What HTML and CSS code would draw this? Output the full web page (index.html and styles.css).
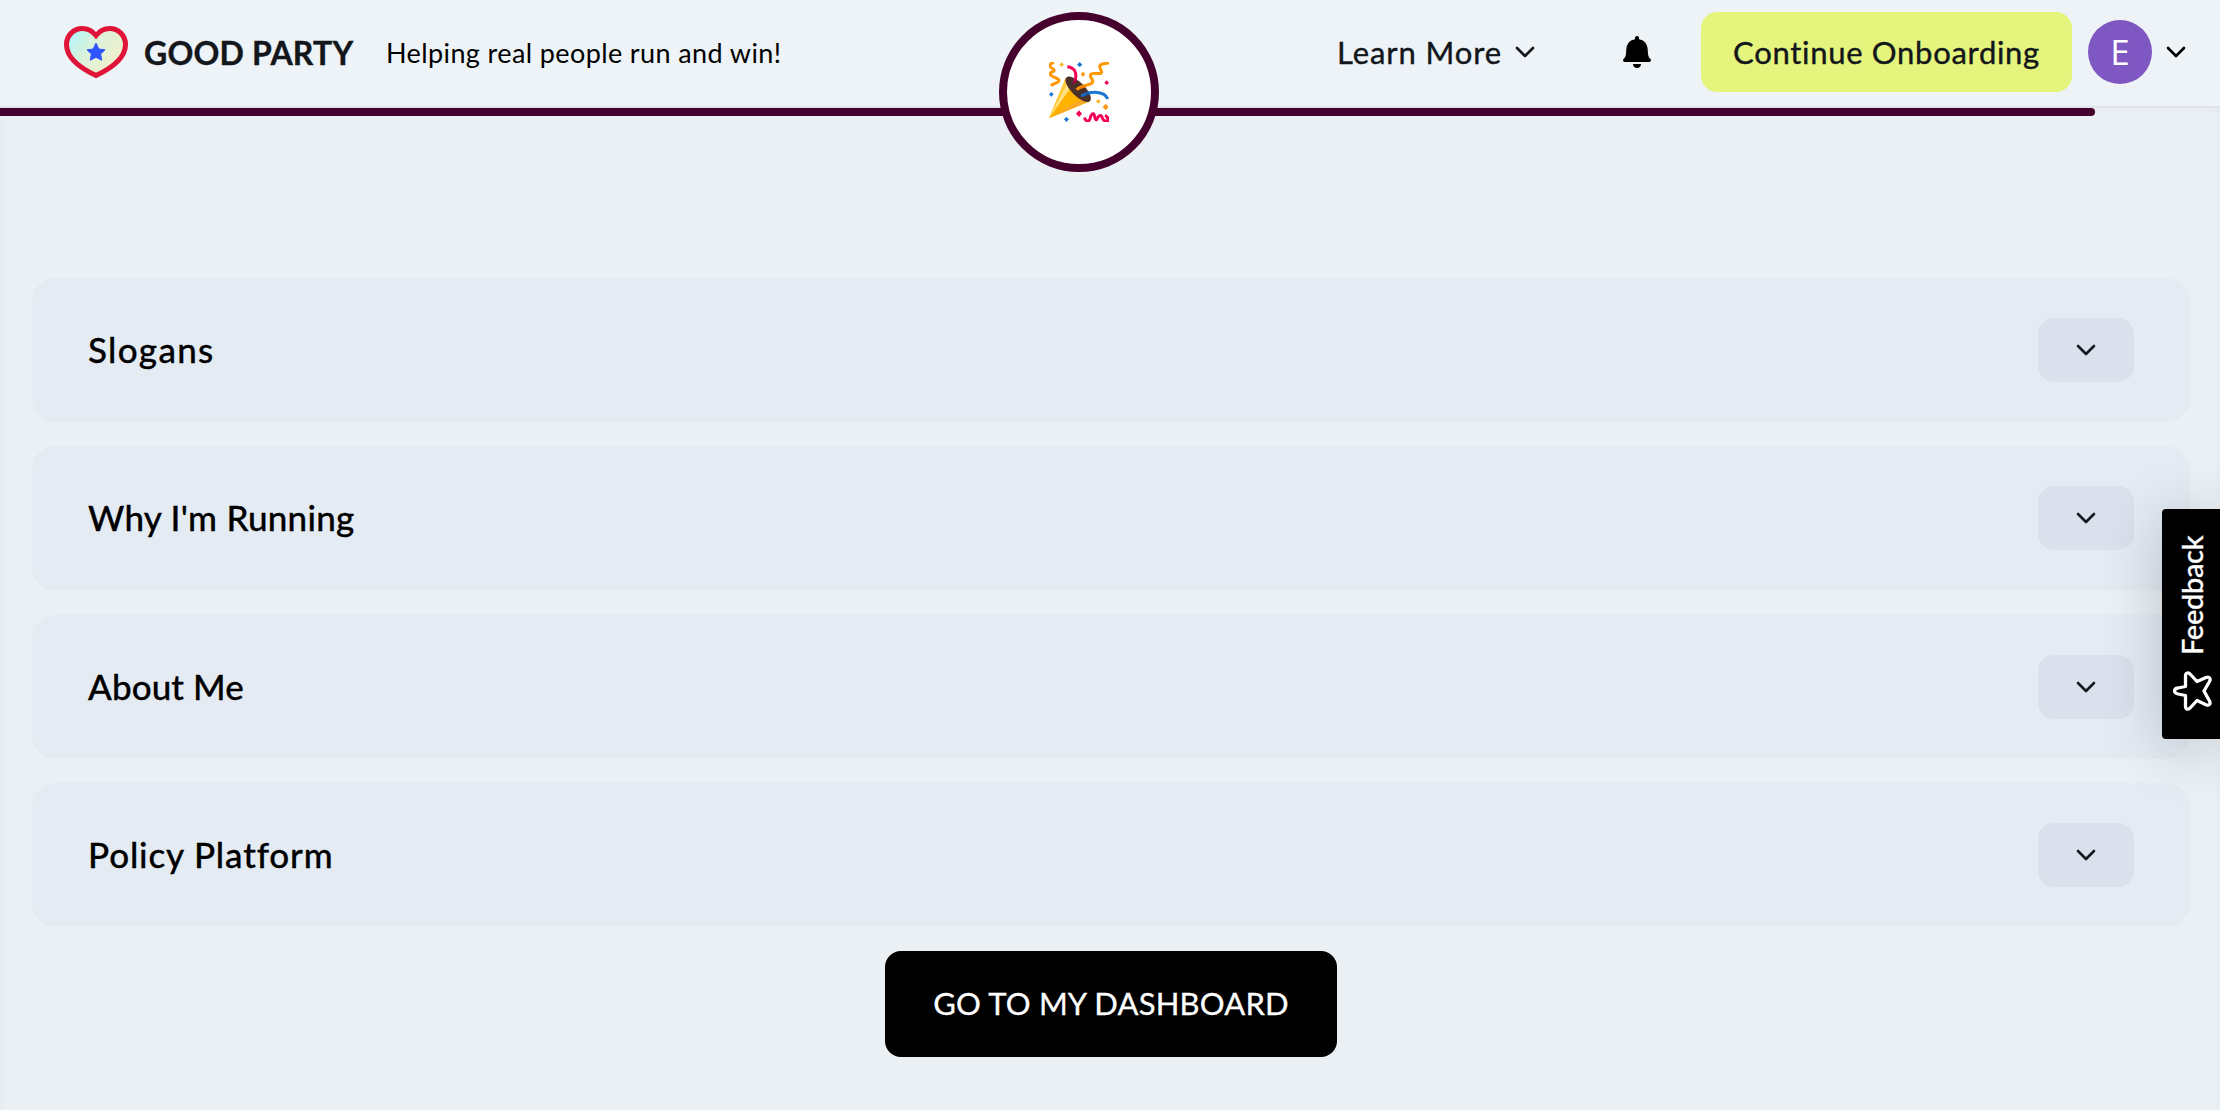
FILE: index.html
```html
<!DOCTYPE html>
<html lang="en">
<head>
    <meta charset="UTF-8">
    <title>Good Party</title>
    <link rel="stylesheet" href="styles.css">
</head>
<body>
    <header class="navbar">
        <a class="logo">
            <svg class="logo-heart" viewBox="0 0 64 53">
                <defs>
                    <linearGradient id="heartFill" x1="0" y1="0" x2="1" y2="0.6">
                        <stop offset="0.05" stop-color="#aff5fb"/>
                        <stop offset="0.5" stop-color="#dcf2d9"/>
                        <stop offset="1" stop-color="#f3efca"/>
                    </linearGradient>
                </defs>
                <path d="M32 9.5C28 4.500 23.500 2.500 18.500 2.500C9.500 2.500 2.500 9.500 2.500 18.500C2.500 32 16 42 32 49.500C48 42 61.500 32 61.500 18.500C61.500 9.500 54.500 2.500 45.500 2.500C40.500 2.500 36 4.500 32 9.500Z" fill="url(#heartFill)" stroke="#df1438" stroke-width="5"/>
                <path d="M32 17L34.800 23L41 23.800L36.600 28L37.800 34.200L32 31.300L26.200 34.200L27.400 28L23 23.800L29.200 23Z" fill="#2f55ff" stroke="#2f55ff" stroke-linejoin="round"/>
            </svg>
            <span class="logo-text">GOOD PARTY</span>
        </a>
        <div class="tagline">Helping real people run and win!</div>
        <nav class="nav-right">
            <div class="learn-more">
                <span class="learn-text">Learn More</span>
                <svg class="chevron" viewBox="0 0 20 12"><path d="M2 2L10 10L18 2"/></svg>
            </div>
            <svg class="bell" viewBox="0 0 28 32">
                <path d="M14 0C15.200 0 16 0.800 16 2V3.200C21 4 24.200 7.600 24.600 12.500L25.100 18.500C25.300 21 26.500 21.800 27.500 23C28.400 24.200 27.800 26 26.200 26H1.800C0.200 26 -0.400 24.200 0.500 23C1.500 21.800 2.700 21 2.900 18.500L3.400 12.500C3.800 7.600 7 4 12 3.200V2C12 0.800 12.800 0 14 0Z"/>
                <path d="M10 28H18C18 30.500 16.200 32 14 32C11.800 32 10 30.500 10 28Z"/>
            </svg>
            <button class="onboarding">Continue Onboarding</button>
            <div class="avatar">E</div>
            <svg class="chevron chevron-dark" viewBox="0 0 20 12"><path d="M2 2L10 10L18 2"/></svg>
        </nav>
        <div class="progress"></div>
        <div class="badge">
            <svg viewBox="0 0 180 180" class="confetti">
                <path d="M0 169L50 48C60 75 90 108 125 117Z" fill="#ffb300"/>
                <path d="M0 169L50 48C53 62 57 70 62 76Z" fill="#ffca3a"/>
                <path d="M1 167L54 66L64 79Z" fill="#ffe082"/>
                <path d="M2 168L102 108L124 117Z" fill="#f9a825"/>
                <ellipse cx="87.500" cy="82" rx="50" ry="20" transform="rotate(45 87.500 82)" fill="#4b3029"/>
                <path d="M55 14C78 16 86 34 77 60" fill="none" stroke="#f50057" stroke-width="9"/>
                <path d="M71 68C72 60 76 55 80 50L83 52C83 60 78 66 71 68Z" fill="#a4003f"/>
                <path d="M83 83C96 70 110 72 126 65C138 59 125 48 124 42C124 29 145 37 155 34C165 29 146 18 154 9C161 3 171 4 180 3" fill="none" stroke="#ff9800" stroke-width="9"/>
                <path d="M82 84L104 68L113 76Z" fill="#ef7d00"/>
                <path d="M97 102C127 85 168 88 176 111" fill="none" stroke="#1976d2" stroke-width="9"/>
                <path d="M96 103L118 87L122 97Z" fill="#155cb0"/>
                <path d="M15 1C1 6 -2 11 8 18C18 24 18 27 9 30C-2 34 3 40 14 45C25 49 34 54 28 59C20 66 11 65 6 71" fill="none" stroke="#ff9800" stroke-width="9"/>
                <path d="M106 167C112 180 119 181 123 170C127 154 133 151 136 160C139 172 141 178 145 169C151 157 158 158 160 168C162 179 174 178 177 179C178 171 176 163 168 160" fill="none" stroke="#f50057" stroke-width="9"/>
                <path d="M38 1L45 8L38 15L31 8ZM148 111L155 118L148 125L141 118Z" fill="#fbb836"/>
                <path d="M102 29L109 37L102 45L95 37ZM170 125L179 135L170 145L161 135Z" fill="#ff9817"/>
                <path d="M92 0L100 8L92 15L84 8ZM7 90L14 97L7 104L0 97ZM52 165L60 172L52 180L45 172Z" fill="#1976d2"/>
                <path d="M90 145L99 155L90 165L81 155ZM173 55L180 62L173 69L166 62Z" fill="#f50057"/>
            </svg>
        </div>
    </header>

    <main class="content">
        <section class="card">
            <h3 class="card-title slogans">Slogans</h3>
            <button class="toggle"><svg class="chevron" viewBox="0 0 20 12"><path d="M2 2L10 10L18 2"/></svg></button>
        </section>
        <section class="card">
            <h3 class="card-title why">Why I'm Running</h3>
            <button class="toggle"><svg class="chevron" viewBox="0 0 20 12"><path d="M2 2L10 10L18 2"/></svg></button>
        </section>
        <section class="card">
            <h3 class="card-title about">About Me</h3>
            <button class="toggle"><svg class="chevron" viewBox="0 0 20 12"><path d="M2 2L10 10L18 2"/></svg></button>
        </section>
        <section class="card">
            <h3 class="card-title policy">Policy Platform</h3>
            <button class="toggle"><svg class="chevron" viewBox="0 0 20 12"><path d="M2 2L10 10L18 2"/></svg></button>
        </section>
        <button class="dashboard">GO TO MY DASHBOARD</button>
    </main>

    <div class="feedback">
        <span class="feedback-text">Feedback</span>
        <svg class="star" viewBox="0 0 40 40">
            <path d="M2.500 20C2.500 18 4 17.300 6 17L13.500 15.500V5C13.500 1.500 16.500 1 18.500 3.500L25 10.500L34 6.500C37.500 5 39 8 37.500 10.500L32 20L37.500 30C39 33 37 35 34 33.800L25 29.500L18.500 36.500C16.500 39 13.500 38.500 13.500 35.500V24.500L6 23C4 22.500 2.500 22 2.500 20Z"/>
        </svg>
    </div>
</body>
</html>
```
FILE: styles.css
```css
* {
    box-sizing: border-box;
}
body {
    margin: 0;
    height: 1110px;
    overflow: hidden;
    font-family: Lato, "Open Sans", sans-serif;
    background-color: #eaf0f4;
    color: #000;
}
button {
    font-family: inherit;
    border: none;
    padding: 0;
    white-space: nowrap;
}
.navbar {
    position: relative;
    z-index: 2;
    height: 108px;
    display: flex;
    align-items: center;
    padding: 0 34px 2px 64px;
    background-color: #edf3f7;
    border-bottom: 2px solid #e1e4e8;
}
.logo {
    display: flex;
    align-items: center;
    width: 322px;
}
.logo-heart {
    width: 64px;
    height: 53px;
}
.logo-text {
    margin-left: 16px;
    font-size: 32px;
    font-weight: 700;
    letter-spacing: 0.2px;
    color: #13161a;
    -webkit-text-stroke: 0.4px #13161a;
    white-space: nowrap;
}
.tagline {
    font-size: 27px;
    letter-spacing: 0.39px;
}
.nav-right {
    display: flex;
    align-items: center;
    margin-left: auto;
}
.learn-more {
    display: flex;
    align-items: center;
    justify-content: space-between;
    width: 198px;
    margin-right: 88px;
    font-size: 31px;
    letter-spacing: 0.9px;
    color: #13161a;
    -webkit-text-stroke: 0.4px #13161a;
}
.chevron {
    width: 20px;
    height: 12px;
    fill: none;
    stroke: #13161a;
    stroke-width: 2.6;
    stroke-linecap: round;
    stroke-linejoin: round;
}
.chevron-dark {
    stroke: #000;
}
.bell {
    width: 28px;
    height: 32px;
    margin-right: 50px;
}
.onboarding {
    width: 371px;
    height: 80px;
    border-radius: 16px;
    background-color: #e4f47c;
    color: #13161a;
    font-size: 31px;
    letter-spacing: 0.7px;
    -webkit-text-stroke: 0.4px #13161a;
}
.avatar {
    width: 64px;
    height: 64px;
    margin: 0 14px 0 16px;
    border-radius: 50%;
    background-color: #7e57c2;
    color: #fff;
    font-family: "Open Sans", sans-serif;
    font-size: 35px;
    line-height: 64px;
    text-align: center;
}
/* progress line under the navbar */
.progress {
    position: absolute;
    left: 0;
    top: 108px;
    width: 2095px;
    height: 8px;
    border-radius: 0 4px 4px 0;
    background-color: #46002e;
}
.badge {
    position: absolute;
    left: 999px;
    top: 12px;
    width: 160px;
    height: 160px;
    display: flex;
    align-items: center;
    justify-content: center;
    border: 8px solid #46002e;
    border-radius: 50%;
    background-color: #fff;
}
.confetti {
    width: 60px;
    height: 60px;
}
.content {
    height: 1022px;
    padding: 170px 30px 0 32px;
    display: flex;
    flex-direction: column;
    align-items: center;
    box-shadow: inset 0 0 10px rgba(0, 20, 40, 0.04);
}
.card {
    width: 100%;
    height: 144.33px;
    margin-bottom: 24px;
    padding: 0 56px;
    display: flex;
    align-items: center;
    justify-content: space-between;
    border-radius: 24px;
    background-color: #e4ebf3;
}
.card-title {
    margin: 0;
    padding-bottom: 2px;
    font-size: 35px;
    font-weight: 500;
    -webkit-text-stroke: 0.3px #000;
}
.slogans {
    letter-spacing: 1.3px;
}
.why {
    letter-spacing: 0.25px;
}
.about {
    letter-spacing: 0.1px;
}
.policy {
    letter-spacing: 0.85px;
}
.toggle {
    display: flex;
    align-items: center;
    justify-content: center;
    width: 96px;
    height: 64px;
    border-radius: 16px;
    background-color: #dbe1ec;
}
.dashboard {
    width: 452px;
    height: 106px;
    padding-bottom: 2px;
    border-radius: 16px;
    background-color: #000;
    color: #fff;
    font-size: 31px;
    letter-spacing: 0.2px;
    -webkit-text-stroke: 0.3px #fff;
}
.feedback {
    position: absolute;
    z-index: 3;
    right: 0;
    top: 509px;
    width: 58px;
    height: 230px;
    padding: 28px 0 0 10px;
    border-radius: 4px 0 0 4px;
    background-color: #000;
    color: #fff;
    box-shadow: 0 8px 60px rgba(0, 0, 0, 0.2);
}
.feedback-text {
    display: block;
    height: 118px;
    writing-mode: vertical-rl;
    transform: rotate(180deg);
    font-size: 29px;
    font-weight: 500;
    letter-spacing: -0.3px;
    line-height: 40px;
    -webkit-text-stroke: 0.3px #fff;
}
.star {
    display: block;
    width: 40px;
    height: 40px;
    margin-top: 16px;
    fill: none;
    stroke: #fff;
    stroke-width: 3.3;
    stroke-linejoin: round;
}
```
